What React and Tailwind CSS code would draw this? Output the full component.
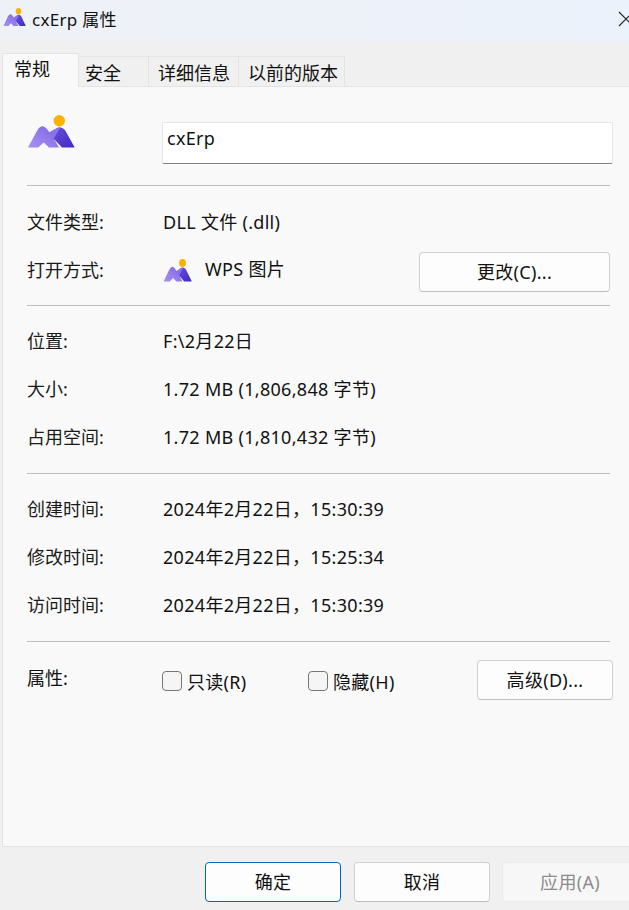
const font = { fontFamily: '"Noto Sans", "Noto Sans CJK SC", sans-serif' };

function Logo({ className, id, stretch }) {
  return (
    <svg viewBox="0 0 48 36" preserveAspectRatio={stretch ? "none" : "xMidYMid meet"} className={className}>
      <defs>
        <linearGradient id={id + "a"} x1="0" y1="1" x2="1" y2="0">
          <stop offset="0" stopColor="#a890f2" />
          <stop offset="1" stopColor="#7d66e6" />
        </linearGradient>
        <linearGradient id={id + "b"} x1="0" y1="0" x2="1" y2="1">
          <stop offset="0" stopColor="#6a50e0" />
          <stop offset="1" stopColor="#4329c0" />
        </linearGradient>
      </defs>
      <circle cx="32.3" cy="5.7" r="5.7" fill="#fdb100" />
      <path d="M1 32.5 L10.5 15 Q15 8 20 14 L26 22 L32 32.5 H22 L16.7 27.5 L11.2 32.5 Z" fill={`url(#${id}a)`} />
      <path d="M22 19.5 L28 14.5 Q33 10 38 15 L47.7 32.5 H35 L27 24 Z" fill={`url(#${id}b)`} />
      <path d="M21 18 L27 14.5 Q30 12.5 33 13 L26 25 Z" fill="#8a72ea" />
    </svg>
  );
}

function Row({ label, children, h = "h-12" }) {
  return (
    <div className={`flex items-center ${h}`}>
      <div className="w-[136px] text-[#1a1a1a] tracking-normal">{label}</div>
      <div className="flex-1 flex items-center">{children}</div>
    </div>
  );
}

function Hr() {
  return <div className="h-px bg-[#bdbdbd] w-[583px]" />;
}

function Btn({ children, className = "" }) {
  return (
    <button className={`h-10 rounded-[4px] border border-[#d0d0d0] border-b-[#bcbcbc] bg-[#fdfdfd] text-center text-[#111] ${className}`}>
      {children}
    </button>
  );
}

function Check({ label, className = "" }) {
  return (
    <label className={`flex items-center ${className}`}>
      <span className="w-5 h-5 rounded-[4px] border border-[#767676] bg-[#f5f5f5] shrink-0" />
      <span className="ml-[5px] mt-[1px] text-[#111]">{label}</span>
    </label>
  );
}

export default function App() {
  return (
    <div className="w-[629px] h-[910px] overflow-hidden bg-[#f0f0f0] text-[18px] tracking-[0.3px] leading-6 text-[#111] flex flex-col" style={font}>
      <div className="h-[41px] bg-gradient-to-r from-[#eef2f7] to-[#ecf2fb] flex items-center pl-[3px] shrink-0">
        <Logo id="t" stretch className="w-[23px] h-5 -mt-[5px]" />
        <span className="ml-[6px] text-[17px] -mt-[2px]">cxErp 属性</span>
        <svg viewBox="0 0 16 16" className="w-4 h-4 ml-auto -mr-[5px] -mt-[3px]" fill="none" stroke="#222" strokeWidth="1.1">
          <path d="M1 1 L15 15 M15 1 L1 15" />
        </svg>
      </div>

      <div className="h-[45px] shrink-0 flex items-end pl-[2px] relative">
        <div className="h-[34px] w-[77px] -mb-px relative z-10 bg-[#f9f9f9] border border-b-0 border-[#e4e4e4] rounded-t-[2px] pl-[11px] pt-[3px] text-[#111] tracking-normal">常规</div>
        <div className="h-[30px] w-[70px] border border-l-0 border-b-0 border-[#e4e4e4] pl-[6px] pt-[4px] whitespace-nowrap tracking-normal">安全</div>
        <div className="h-[30px] w-[90px] border border-l-0 border-b-0 border-[#e4e4e4] pl-[9px] pt-[4px] whitespace-nowrap tracking-normal">详细信息</div>
        <div className="h-[30px] w-[106px] border border-l-0 border-b-0 border-[#e4e4e4] pl-[9px] pt-[4px] whitespace-nowrap tracking-normal">以前的版本</div>
      </div>

      <div className="ml-[2px] h-[761px] shrink-0 bg-[#f9f9f9] border-t border-l border-b border-[#e3e3e3] pl-[24px]">
        <div className="h-[98px] flex items-start">
          <Logo id="m" className="w-[48px] h-[36px] mt-[28px]" />
          <div className="ml-[87px] mt-[35px] w-[451px] h-[42px] bg-white border border-[#e6e6e6] border-b-[#848484] rounded-[2px] pl-[4px] pt-[3px]">cxErp</div>
        </div>
        <Hr />
        <div className="pt-3 h-[119px]">
          <Row label="文件类型:">DLL 文件 (.dll)</Row>
          <Row label="打开方式:">
            <Logo id="w" stretch className="w-[29px] h-[25px] mt-[3px]" />
            <span className="ml-[13px] -mt-[2px]">WPS 图片</span>
            <Btn className="w-[191px] ml-auto mr-[19px] mt-1">更改(C)...</Btn>
          </Row>
        </div>
        <Hr />
        <div className="pt-[11px] h-[167px]">
          <Row label="位置:">F:\2月22日</Row>
          <Row label="大小:">1.72 MB (1,806,848 字节)</Row>
          <Row label="占用空间:">1.72 MB (1,810,432 字节)</Row>
        </div>
        <Hr />
        <div className="pt-[11px] h-[167px]">
          <Row label="创建时间:">2024年2月22日，15:30:39</Row>
          <Row label="修改时间:">2024年2月22日，15:25:34</Row>
          <Row label="访问时间:">2024年2月22日，15:30:39</Row>
        </div>
        <Hr />
        <div className="pt-[18px] flex items-start">
          <div className="w-[135px] mt-[6px] tracking-normal">属性:</div>
          <Check label="只读(R)" className="w-[146px] mt-[9px] h-6" />
          <Check label="隐藏(H)" className="w-[169px] mt-[9px] h-6" />
          <Btn className="w-[136px]">高级(D)...</Btn>
        </div>
      </div>

      <div className="flex items-start pl-[205px] pt-[15px]">
        <button className="w-[136px] h-10 shrink-0 rounded-[4px] border border-[#0067c0] bg-[#fdfdfd]">确定</button>
        <Btn className="w-[136px] shrink-0 ml-[13px]">取消</Btn>
        <button className="w-[136px] h-10 shrink-0 ml-[12px] rounded-[4px] border border-[#ebebeb] bg-[#f7f7f7] text-[#8c8c8c]">应用(A)</button>
      </div>
    </div>
  );
}
